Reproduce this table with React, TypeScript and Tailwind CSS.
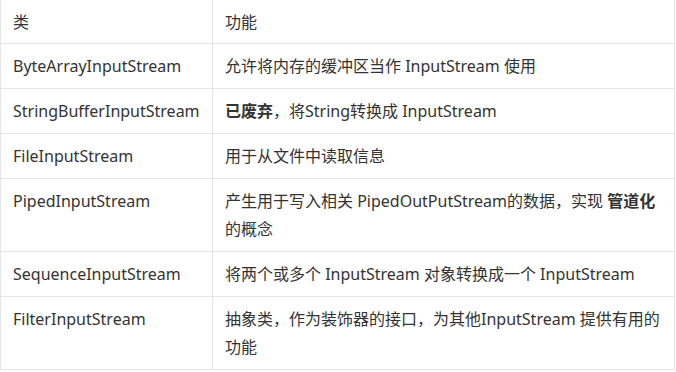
const rows: [string, React.ReactNode][] = [
  ["ByteArrayInputStream", <>允许将内存的缓冲区当作 InputStream 使用</>],
  ["StringBufferInputStream", <><b className="font-bold">已废弃</b>，将String转换成 InputStream</>],
  ["FileInputStream", <>用于从文件中读取信息</>],
  ["PipedInputStream", <>产生用于写入相关 PipedOutPutStream的数据，实现 <b className="font-bold">管道化</b>的概念</>],
  ["SequenceInputStream", <>将两个或多个 InputStream 对象转换成一个 InputStream</>],
  ["FilterInputStream", <>抽象类，作为装饰器的接口，为其他InputStream 提供有用的功能</>],
];

export default function App() {
  return (
    <div className="w-[676px] h-[372px] bg-white overflow-hidden text-[#333] text-[16px] leading-[28px]" style={{ fontFamily: '"Noto Sans", "Noto Sans CJK SC", sans-serif' }}>
      <div className="mt-[-1px] w-[675px] border-l border-r border-[#e5e5e5]">
        <div className="grid grid-cols-[212px_1fr] border-t border-b border-[#e5e5e5] h-[45px]">
          <div className="px-[12px] py-[8px] border-r border-[#e5e5e5]">类</div>
          <div className="px-[12px] py-[8px]">功能</div>
        </div>
        {rows.map(([a, b], i) => (
          <div key={i} className="grid grid-cols-[212px_1fr] border-b border-[#e5e5e5]">
            <div className="px-[12px] py-[8px] border-r border-[#e5e5e5]">{a}</div>
            <div className="px-[12px] py-[8px]">{b}</div>
          </div>
        ))}
      </div>
    </div>
  );
}
